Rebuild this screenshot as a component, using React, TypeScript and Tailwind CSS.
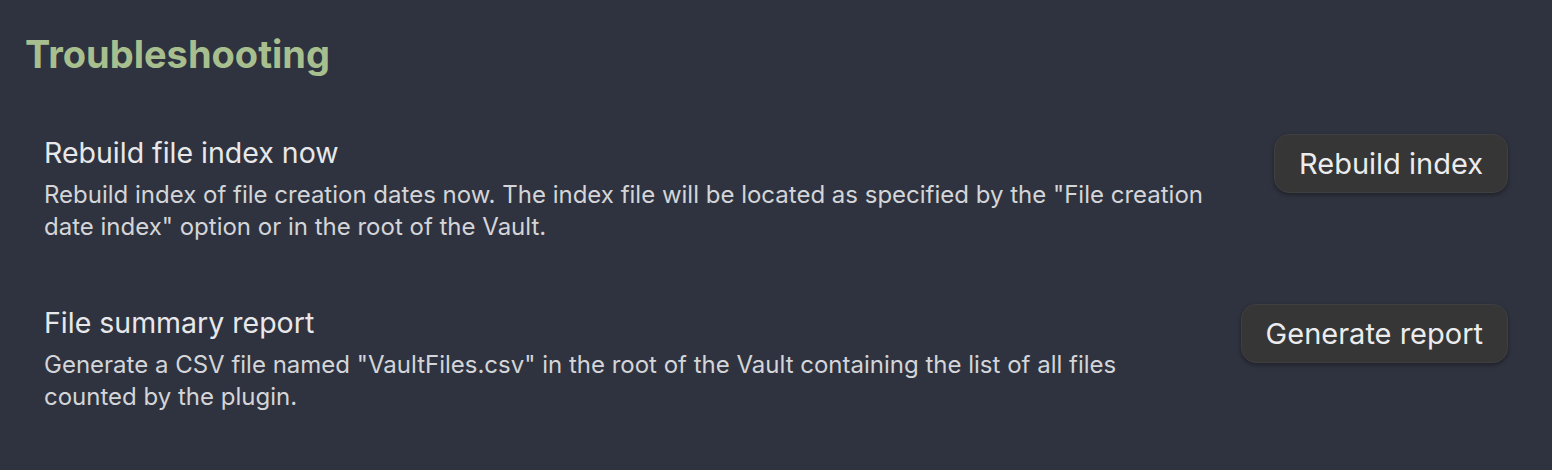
import React from 'react';

const SETTINGS = [
  {
    name: 'Rebuild file index now',
    desc: 'Rebuild index of file creation dates now. The index file will be located as specified by the "File creation date index" option or in the root of the Vault.',
    action: 'Rebuild index',
  },
  {
    name: 'File summary report',
    desc: 'Generate a CSV file named "VaultFiles.csv" in the root of the Vault containing the list of all files counted by the plugin.',
    action: 'Generate report',
  },
];

export default function App() {
  return (
    <div
      className="w-[1552px] h-[470px] bg-[#2f333f] overflow-hidden"
      style={{ fontFamily: 'Inter, "Noto Sans", sans-serif' }}
    >
      <h2 className="pl-[25px] pt-[28px] text-[38px] leading-[52px] font-bold text-[#a7bf8e] tracking-[0px]">
        Troubleshooting
      </h2>

      <div className="pl-[44px] pr-[44px] pt-[53px] flex flex-col gap-[60px]">
        {SETTINGS.map((s) => (
          <div key={s.name} className="flex items-start justify-between">
            <div className="w-[1160px]">
              <div className="text-[28.5px] leading-[40px] text-[#e8e8ea]">{s.name}</div>
              <div className="mt-[6px] text-[24px] leading-[32px] text-[#d4d5d8]">{s.desc}</div>
            </div>
            <button className="mt-[1px] h-[59px] px-[24px] rounded-[15px] bg-[#363636] text-[29px] text-[#ececee] shadow-[0_2px_4px_rgba(0,0,0,0.35)] border border-[#3f3f42]">
              {s.action}
            </button>
          </div>
        ))}
      </div>
    </div>
  );
}
